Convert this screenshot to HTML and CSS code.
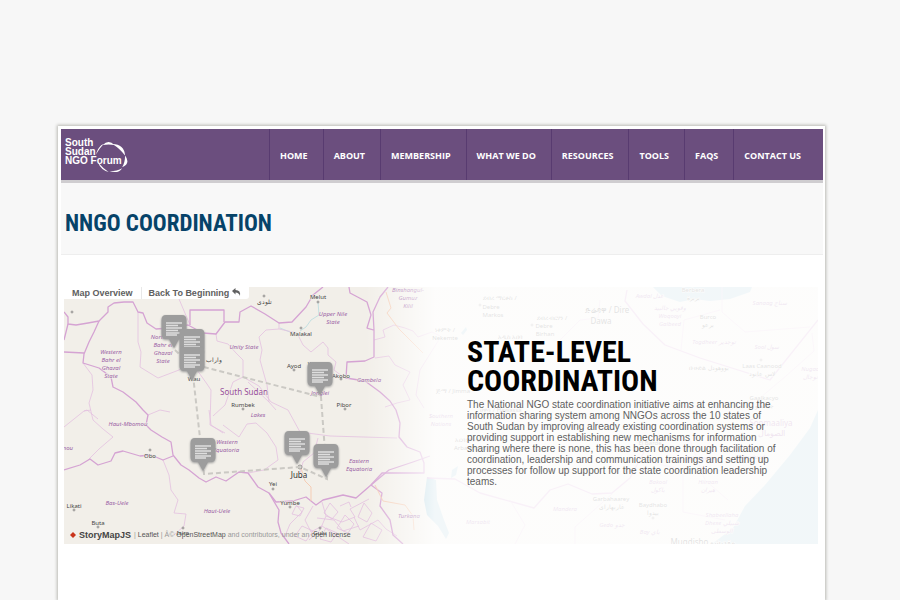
FILE: index.html
```
<!DOCTYPE html>
<html lang="en">
<head>
<meta charset="utf-8">
<title>NNGO Coordination</title>
<link rel="stylesheet" href="styles.css">
</head>
<body>
<div class="page">
  <header class="site-header">
    <a class="logo" href="#" aria-label="South Sudan NGO Forum">
      <svg class="logo-ring" viewBox="0 0 34 34" aria-hidden="true">
        <path d="M1 14C3 7 6 4 9 3C6 6 4 9 1 14Z"/>
        <path d="M8 4Q14 -2 20 4Q14 3 8 4Z"/>
        <path d="M18 3Q30 3 31 15Q26 8 18 3Z"/>
        <path d="M31 15Q37 23 28 27Q31 22 31 15Z"/>
        <path d="M28 28Q24 34 15 31Q23 31 28 28Z"/>
        <path d="M14 32Q6 30 3 22Q8 28 14 32Z"/>
      </svg>
      <span class="logo-text">South<br>Sudan<br>NGO Forum</span>
    </a>
    <nav class="main-nav">
      <a href="#">HOME</a><a href="#">ABOUT</a><a href="#">MEMBERSHIP</a><a href="#">WHAT WE DO</a><a href="#">RESOURCES</a><a href="#">TOOLS</a><a href="#">FAQS</a><a href="#">CONTACT US</a>
    </nav>
  </header>
  <div class="title-band"><h1>NNGO COORDINATION</h1></div>
  <main class="content">
    <section class="storymap">
      <svg class="map" viewBox="64 287 754 257" preserveAspectRatio="xMinYMin slice" role="img" aria-label="Map of South Sudan">
        <defs>
          <linearGradient id="fade" gradientUnits="userSpaceOnUse" x1="365" y1="0" x2="435" y2="0">
            <stop offset="0" stop-color="#fff" stop-opacity="0"/>
            <stop offset="1" stop-color="#fff" stop-opacity=".85"/>
          </linearGradient>
          <g id="pin">
            <path class="pin-body" d="M-8-13H8Q12.500-13 12.500-8V6Q12.500 11 8 11H5L0 20L-5 11H-8Q-12.500 11-12.500 6V-8Q-12.500-13-8-13Z"/>
            <path class="pin-lines" d="M-8-5H8M-8-2.500H4M-8 0H8M-8 2.500H4M-8 5H8M-8 7H3"/>
          </g>
        </defs>
        <rect class="land" x="64" y="287" width="754" height="257"/>
        <g class="water">
          <path d="M653 287L662 296L680 302L694 299L710 301L730 299L750 292L752 287Z"/>
          <path d="M818 410L810 428L790 455L765 485L745 506L733 528L712 544H818Z"/>
          <path d="M427 477L436 480L437 500L444 520L449 533L446 539L438 526L427 515L424 500Z"/>
          <path d="M452 470L458 466L456 475L451 478Z"/>
          <path d="M461 333L466 327L467 330L463 335Z"/>
        </g>
        <g class="river">
          <path d="M318 302L319 315L311 320L306 327L300 331M280 328L290 332"/>
        </g>
        <g class="border-minor">
          <path d="M138 312L138 342L141 352L140 367L158 378L179 370L190 360M179 299L190 325M216 334L217 341L228 344L236 353L243 360L243 377L233 382L225 405L213 416M190 360L197 370L207 384L211 390L210 425L225 433"/>
          <path d="M279 323L279 329L266 330L259 337L262 350L260 360L267 385L269 402L276 410M243 377L259 386L271 402L288 410L300 432L330 436L397 438"/>
          <path d="M279 329L297 333L303 345L311 352L323 342L328 348L328 355L336 362L334 370L346 379M318 438L314 453L303 462L300 474"/>
          <path d="M269 402L248 382M223 425L239 437L247 424L256 423L267 433L276 447L278 460L264 470L248 473"/>
          <path d="M83 363L92 375L93 390L89 403L93 420L103 429L113 437L99 449L88 460M84 411L87 410L98 419M64 427L84 411L91 410"/>
          <path d="M163 460L169 475L171 490L178 500L174 513L186 514L184 526L174 535M148 415L160 410L170 412M209 410L211 425L223 433"/>
          <path d="M375 358L389 356L395 365L410 372L403 385L410 400L397 403L385 407M374 340L385 337L383 330L394 325L405 328L413 331L418 337L432 332L440 336"/>
          <path d="M313 506L305 520L311 532L322 526L337 536L349 544M322 502L326 516L342 522L355 517L350 509L369 499M293 501L302 512L290 524L285 536M326 516L320 530L309 540M354 517L360 530L378 520L386 529L397 536M340 506L349 502L351 507M317 518L334 520L343 531L359 526"/>
          <path d="M296 506L304 508L300 516L292 514ZM330 503L338 512L332 519L324 513ZM345 515L354 524L348 533L337 528ZM364 503L372 513L367 522L358 517ZM371 523L382 530L376 541L363 537ZM302 526L313 531L306 541L295 536ZM326 528L337 533L331 542L320 539Z"/>
        </g>
        <g class="border-main">
          <path d="M64 312L68 317L68 324L76 325L88 323L99 321L108 312L108 307L114 303L124 302L133 302L138 312L143 313L147 323L156 329L170 328L188 325L203 333L216 334L225 322L239 322L240 312L251 306L265 314L279 323L292 322L306 307L313 295L323 287"/>
          <path d="M190 325V310H224V322M68 324L64 340M64 352L84 353M99 321L94 332L89 342L84 354L83 363L99 368L111 377L113 387L123 392L136 402L143 410L148 415L146 425L151 430L162 437L171 442L173 455L181 465L189 470L199 478L206 482L216 477L226 481L239 472L248 473L258 487L269 493L276 502L293 501L306 497L316 505L323 500L343 495L356 498L371 485L389 470L413 462L430 456"/>
          <path d="M64 470L80 465L90 459L98 465L111 461L115 453L123 451L140 456L151 455L163 460L173 456M269 493L279 510L278 522L281 533L289 544"/>
          <path d="M349 287L350 293L367 302L371 315L367 328L374 330L374 357L365 361L347 362L346 378L365 381L380 392L390 401L396 410L400 423L399 437L407 447L420 452L424 463L424 473H382L371 485M374 330L373 312L380 297L388 287"/>
          <path d="M371 485L382 493L380 506L390 520L393 535L403 544M427 478L455 479L480 493L534 508L550 490L568 484L592 494L612 493L630 478L645 450M627 290L625 301L643 324L665 345L700 358L770 380L818 320"/>
        </g>
        <g class="road">
          <path d="M386 292L391 308L387 313L399 329L412 342L423 353M375 485L383 501L405 505L413 516L414 530M301 468L305 481L311 487L311 501"/>
        </g>
        <g class="border-minor">
          <path d="M722 287L722 312L745 332L810 327M684 320L720 310M684 320L681 350M812 333L814 351L786 376L760 398M600 300L598 318L580 320L560 340M440 338L420 370L416 395L424 408M575 544V527L612 494M690 440L705 480L728 500M650 462L683 470L683 512L725 520M510 500L525 525L515 544"/>
        </g>
        <g class="labels region">
          <text x="111" y="354">Western</text><text x="111" y="362">Bahr el</text><text x="111" y="370">Ghazal</text><text x="111" y="378">State</text>
          <text x="163" y="339">Northern</text><text x="163" y="347">Bahr el</text><text x="163" y="355">Ghazal</text><text x="163" y="363">State</text>
          <text x="333" y="316">Upper Nile</text><text x="333" y="324">State</text><text x="244" y="349">Unity State</text>
          <text x="369" y="382">Gambela</text><text x="320" y="395">Jonglei</text><text x="258" y="417">Lakes</text>
          <text x="227" y="444">Western</text><text x="226" y="452">Equatoria</text><text x="359" y="463">Eastern</text><text x="359" y="471">Equatoria</text>
          <text x="128" y="426">Haut-Mbomou</text><text x="67" y="450">mou</text><text x="117" y="505">Bas-Uele</text><text x="217" y="513">Haut-Uele</text><text x="409" y="518">Turkana</text>
          <text x="408" y="292">Binshangul-</text><text x="408" y="300">Gumuz</text><text x="408" y="308">Kilil</text>
          <text x="441" y="418">Southern</text><text x="441" y="426">Nations</text><text x="478" y="524">Marsabit</text><text x="565" y="511">Mandera</text>
          <text x="650" y="298">Awdal عدل</text><text x="670" y="310">وقويي جالبيد</text><text x="670" y="318">Woqooyi</text><text x="670" y="326">Galbeed</text>
          <text x="770" y="305">Sanaag سناج</text><text x="714" y="344">Togdheer توجدير</text><text x="767" y="349">Sool سول</text><text x="811" y="371">Nugaal</text><text x="810" y="379">نوجال</text>
          <text x="658" y="484">Bakool</text><text x="658" y="492">باكول</text><text x="708" y="484">Hiiraan</text><text x="708" y="492">هيران</text><text x="701" y="460">Beledweyne</text><text x="750" y="459">Galguduud</text>
          <text x="722" y="517">Shabeellaha</text><text x="722" y="525">Dhexe شبيلي</text><text x="722" y="533">الوسطى</text><text x="612" y="527">Gedo جدو</text><text x="650" y="534">Bay باي</text>
        </g>
        <g class="labels town">
          <text x="264" y="304">تلودي</text><text x="318" y="299">Melut</text><text x="301" y="336">Malakal</text><text x="294" y="368">Ayod</text><text x="315" y="366">Waat</text><text x="341" y="378">Akobo</text>
          <text x="344" y="407">Pibor</text><text x="243" y="407">Rumbek</text><text x="194" y="381">Wau</text><text x="214" y="362">واراب</text><text x="150" y="458">Obo</text><text x="273" y="486">Yei</text><text x="290" y="505">Yumbe</text><text x="320" y="535">Gulu</text>
          <text x="74" y="508">Likati</text><text x="98" y="525">Buta</text><text x="183" y="535">Isiro</text><text x="500" y="300">ደብረ ማርቆስ /</text><text x="491" y="309">Debre</text><text x="493" y="317">Markos</text><text x="552" y="320">ደብረ ብርሃን /</text><text x="544" y="328">Debre</text><text x="545" y="336">Birhan</text>
          <text x="445" y="332">ነቀምት /</text><text x="445" y="340">Nekemte</text><text x="510" y="339">አዲስ አበባ</text><text class="large" x="607" y="313">ድሬዳዋ / Dire</text><text class="large" x="601" y="324">Dawa</text><text x="453" y="393">ጅማ / Jimma</text><text x="501" y="412">ሀዋሳ / Hawassa</text><text x="468" y="442">አርባ ምንጭ</text><text x="470" y="450">Arba Minch</text>
          <text x="693" y="292">Berbera</text><text x="693" y="300">بربرة</text><text x="708" y="319">Burco</text><text x="708" y="327">برعو</text><text x="709" y="370">ቡሁድል بووهودل</text><text x="762" y="368">Laas Caanood</text><text x="762" y="376">لاس عانود</text><text x="764" y="400">Gaalkacyo</text><text x="764" y="408">جالكعيو</text>
          <text x="611" y="501">Garbahaarey</text><text x="611" y="509">غاربهاراي</text><text x="653" y="507">Baydhabo</text><text x="653" y="515">بيدوا</text><text class="large" x="703" y="545">Muqdisho مقديشو</text><text x="650" y="445">El Barde</text>
        </g>
        <g class="labels capital"><text x="299" y="478">Juba</text></g>
        <g class="labels country"><text x="244" y="395">South Sudan</text><text x="771" y="426">Soomaaliya</text><text x="771" y="436">الصومال</text></g>
        <g class="dots">
          <circle cx="72" cy="312" r="1"/><circle cx="264" cy="296" r="1"/><circle cx="318" cy="302" r="1"/><circle cx="301" cy="328" r="1"/><circle cx="294" cy="370" r="1"/><circle cx="341" cy="379" r="1"/><circle cx="345" cy="409" r="1"/><circle cx="243" cy="409" r="1"/><circle cx="150" cy="450" r="1"/><circle cx="273" cy="489" r="1"/><circle cx="290" cy="507" r="1"/><circle cx="320" cy="528" r="1"/><circle cx="74" cy="510" r="1"/><circle cx="98" cy="527" r="1"/><circle cx="183" cy="528" r="1"/><circle cx="300" cy="467" r="2"/><circle cx="480" cy="305" r="1"/><circle cx="532" cy="325" r="1"/><circle cx="761" cy="360" r="1"/><circle cx="653" cy="518" r="1"/>
        </g>
        <path class="route" d="M175 350L192 366L204 474L300 467L327 479L321 397L192 364"/>
        <use href="#pin" x="174" y="328"/><use href="#pin" x="192" y="342"/><use href="#pin" x="192" y="360"/><use href="#pin" x="320" y="375"/><use href="#pin" x="203" y="451"/><use href="#pin" x="297" y="444"/><use href="#pin" x="326" y="457"/>
        <rect x="64" y="287" width="754" height="257" fill="url(#fade)"/>
      </svg>
      <div class="map-menu">
        <button type="button">Map Overview</button>
        <button type="button">Back To Beginning
          <svg viewBox="0 0 9 8" aria-hidden="true"><path d="M0 3L3.500 0V2Q9 2 8 8Q7 4.500 3.500 4.500V6.500Z"/></svg>
        </button>
      </div>
      <article class="story">
        <h2>STATE-LEVEL COORDINATION</h2>
        <p>The National NGO state coordination initiative aims at enhancing the information sharing system among NNGOs across the 10 states of South Sudan by improving already existing coordination systems or providing support in establishing new mechanisms for information sharing where there is none, this has been done through facilitation of coordination, leadership and communication trainings and setting up processes for follow up support for the state coordination leadership teams.</p>
      </article>
      <div class="credits">
        <svg viewBox="0 0 6 6" aria-hidden="true"><path d="M3 0L6 3L3 6L0 3Z"/></svg>
        <a class="brand" href="#">StoryMapJS</a>
        <span>| <a href="#">Leaflet</a> | Â© <a href="#">OpenStreetMap</a> and contributors, under an <a href="#">open license</a></span>
      </div>
    </section>
  </main>
</div>
</body>
</html>
```

FILE: styles.css
```
* { box-sizing: border-box; }
body {
  margin: 0;
  background: #f7f7f7;
  font-family: "Liberation Sans", Arial, sans-serif;
  color: #606060;
}
a { color: inherit; text-decoration: none; }
.page {
  margin: 126px 75px 0 58px;
  min-height: calc(100vh - 126px);
  padding: 3px 2px 0 3px;
  background: #fff;
  box-shadow: 0 0 3px 1px #b8b8b2;
}
.site-header {
  display: flex;
  justify-content: space-between;
  background: #6b4e7e;
  border-bottom: 3px solid #cfcdd0;
}
.logo {
  position: relative;
  padding: 9px 4px 0;
  color: #fff;
}
.logo-text {
  display: block;
  font-size: 10px;
  line-height: 9px;
  font-weight: bold;
}
.logo-ring {
  position: absolute;
  left: 34px;
  top: 12px;
  width: 33px;
  height: 33px;
  fill: #fff;
}
.main-nav { display: flex; padding-right: 7px; }
.main-nav a {
  padding: 2px 15px 0 10px;
  border-left: 1px solid #583b70;
  font: bold 9px/49px "Open Sans", sans-serif;
  color: #fff;
}
.title-band {
  padding: 24px 4px 14px;
  background: #f8f8f8;
  border-bottom: 1px solid #eee;
}
h1, h2 {
  margin: 0;
  font-family: "Roboto Condensed", Roboto, sans-serif;
  font-weight: bold;
}
h1 { font-size: 23px; line-height: 33px; color: #064369; }
.content { padding: 32px 5px 56px 3px; }
.storymap {
  position: relative;
  display: flex;
  align-items: flex-start;
  justify-content: flex-end;
  min-height: 257px;
  padding-top: 50px;
  overflow: hidden;
}
.map { position: absolute; inset: 0; width: 100%; height: 100%; }
.land { fill: #f2efe9; }
.water { fill: #a5ccda; }
.river { fill: none; stroke: #c4e0e2; stroke-width: 1; }
.road { fill: none; stroke: #f5cdb5; stroke-width: 1; }
.border-main { fill: none; stroke: #d5a3d3; stroke-width: 1.3; stroke-linejoin: round; }
.border-minor { fill: none; stroke: #e3c0e0; stroke-width: .8; stroke-linejoin: round; }
.labels { font: 8px "Noto Sans", "Open Sans", sans-serif; text-anchor: middle; stroke: #f2efe9; stroke-width: 1px; paint-order: stroke; }
.region { font-style: italic; font-size: 6px; fill: #9a62a5; }
.town { fill: #444; font-size: 6px; }
.large { font-size: 8px; }
.capital { fill: #333; }
.country { fill: #99509b; font-size: 8px; }
.dots { fill: #e8e5df; stroke: #777; stroke-width: .7; }
.route { fill: none; stroke: #cbc9c4; stroke-width: 2; stroke-dasharray: 5 3; }
.pin-body { fill: #9d9d9d; filter: drop-shadow(0 1px 1px #999); }
.pin-lines { fill: none; stroke: #dedede; stroke-width: 1.4; }
.map-menu {
  position: absolute;
  left: 0;
  top: 0;
  display: flex;
  background: #fff;
  border-radius: 0 0 3px 0;
}
.map-menu button {
  padding: 0 8px;
  border: 0;
  background: none;
  font: bold 9px/12px "Liberation Sans", Arial, sans-serif;
  color: #606060;
}
.map-menu button + button { border-left: 1px solid #e8e8e8; padding-left: 7px; }
.map-menu svg { width: 9px; height: 8px; fill: #606060; }
.story { position: relative; width: 351px; padding-right: 38px; }
.story h2 { width: 200px; font-size: 30px; line-height: 29px; color: #000; }
.story p { margin: 4px 0 0; font-size: 10px; line-height: 11px; }
.credits {
  position: absolute;
  left: 6px;
  bottom: 3px;
  display: flex;
  align-items: center;
  gap: 3px;
  font-size: 7px;
  line-height: 12px;
  color: #999;
}
.credits svg { width: 6px; height: 6px; fill: #c9341c; }
.credits a { color: #555; }
.credits .brand { font-size: 9px; font-weight: bold; color: #444; }
```
